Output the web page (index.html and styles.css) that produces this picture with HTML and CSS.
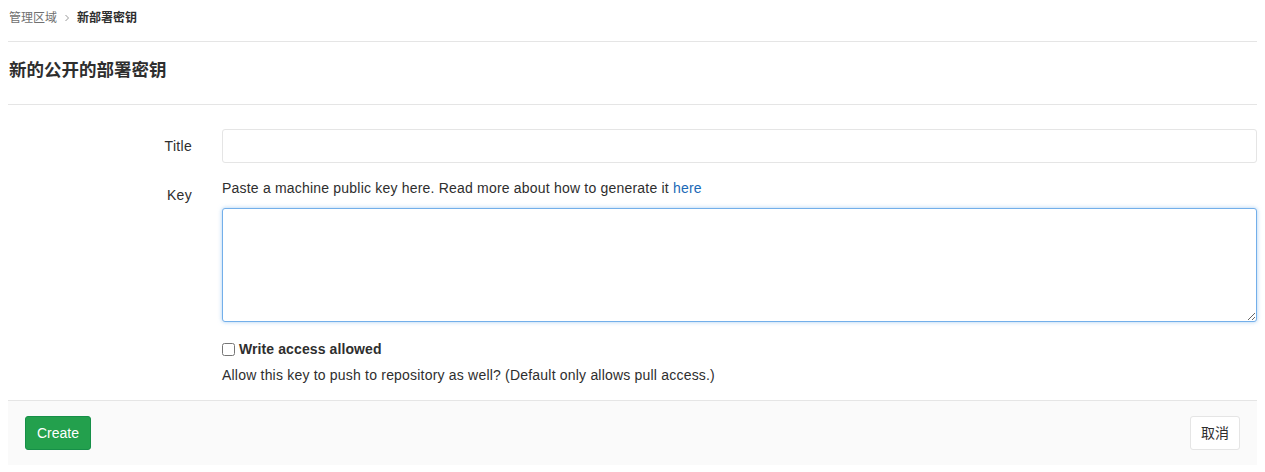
FILE: index.html
```html
<!DOCTYPE html>
<html lang="zh-CN">
<head>
<meta charset="utf-8">
<title>新的公开的部署密钥</title>
<link rel="stylesheet" href="styles.css">
</head>
<body>
<div class="page">
  <nav class="breadcrumbs">
    <a class="crumb" href="#">管理区域</a>
    <svg class="chevron" width="8" height="8" viewBox="0 0 8 8"><path d="M2.5 1 L5.5 4 L2.5 7" fill="none" stroke="#999" stroke-width="1"/></svg>
    <span class="crumb current">新部署密钥</span>
  </nav>
  <h3 class="page-title">新的公开的部署密钥</h3>
  <form class="key-form">
    <div class="form-row title-row">
      <label class="row-label" for="title">Title</label>
      <div class="row-field">
        <input id="title" class="text-input" type="text">
      </div>
    </div>
    <div class="form-row key-row">
      <label class="row-label" for="key">Key</label>
      <div class="row-field">
        <p class="help">Paste a machine public key here. Read more about how to generate it <a href="#">here</a></p>
        <textarea id="key" class="key-area"></textarea>
      </div>
    </div>
    <div class="form-row check-row">
      <div class="row-label"></div>
      <div class="row-field">
        <label class="check-label"><input type="checkbox" class="check"> <strong>Write access allowed</strong></label>
        <p class="help check-help">Allow this key to push to repository as well? (Default only allows pull access.)</p>
      </div>
    </div>
    <div class="form-actions">
      <button type="button" class="btn btn-create">Create</button>
      <button type="button" class="btn btn-cancel">取消</button>
    </div>
  </form>
</div>
</body>
</html>
```
FILE: styles.css
```css
* { box-sizing: border-box; }
html, body { margin: 0; padding: 0; background: #fff; }
body {
  font-family: "Liberation Sans", "Noto Sans CJK SC", sans-serif;
  font-size: 14px;
  color: #2e2e2e;
}
.page { padding: 0 8px; }
.breadcrumbs {
  display: flex;
  align-items: center;
  gap: 6px;
  height: 42px;
  padding-bottom: 6px;
  padding-left: 1px;
  border-bottom: 1px solid #e5e5e5;
  font-size: 12px;
  line-height: 16px;
}
.crumb { color: #707070; text-decoration: none; }
.crumb.current { color: #2e2e2e; font-weight: 700; }
.chevron { margin-top: 1px; }
.page-title {
  margin: 0;
  padding: 16px 0 22px 1px;
  font-size: 17.5px;
  line-height: 24px;
  font-weight: 700;
  color: #2e2e2e;
  border-bottom: 1px solid #e5e5e5;
}
.key-form { padding-top: 24px; }
.form-row {
  display: flex;
  gap: 30px;
  margin-bottom: 15px;
}
.row-label {
  flex: 0 0 184px;
  text-align: right;
  padding-top: 7px;
  line-height: 20px;
  color: #2e2e2e;
  letter-spacing: 0.3px;
}
.row-field { flex: 1; min-width: 0; }
.text-input {
  display: block;
  width: 100%;
  height: 34px;
  border: 1px solid #e5e5e5;
  border-radius: 3px;
  padding: 6px 10px;
  font: inherit;
}
.help {
  margin: 0;
  line-height: 20px;
  color: #2e2e2e;
  letter-spacing: 0.2px;
}
.help a { color: #1b69b6; text-decoration: none; }
.key-row .help { margin-bottom: 10px; }
.key-area {
  display: block;
  width: 100%;
  height: 114px;
  border: 1px solid #73afea;
  border-radius: 3px;
  box-shadow: 0 0 4px rgba(115, 175, 234, 0.6);
  font: inherit;
  resize: vertical;
  outline: none;
}
.check-row { margin-top: 17px; margin-bottom: 15px; }
.check-label {
  display: flex;
  align-items: center;
  gap: 4px;
  line-height: 20px;
  letter-spacing: 0.1px;
}
.check { margin: 0; width: 13px; height: 13px; }
.check-help { margin-top: 6px; }
.form-actions {
  display: flex;
  justify-content: space-between;
  align-items: center;
  padding: 15px 17px;
  background: #fafafa;
  border-top: 1px solid #e5e5e5;
}
.btn {
  height: 34px;
  padding: 6px 10px;
  border-radius: 3px;
  font: inherit;
  line-height: 20px;
  cursor: pointer;
}
.btn-create {
  background: #23a04d;
  border: 1px solid #168f48;
  color: #fff;
  width: 66px;
}
.btn-cancel {
  background: #fff;
  border: 1px solid #e5e5e5;
  color: #2e2e2e;
  width: 50px;
}
```
